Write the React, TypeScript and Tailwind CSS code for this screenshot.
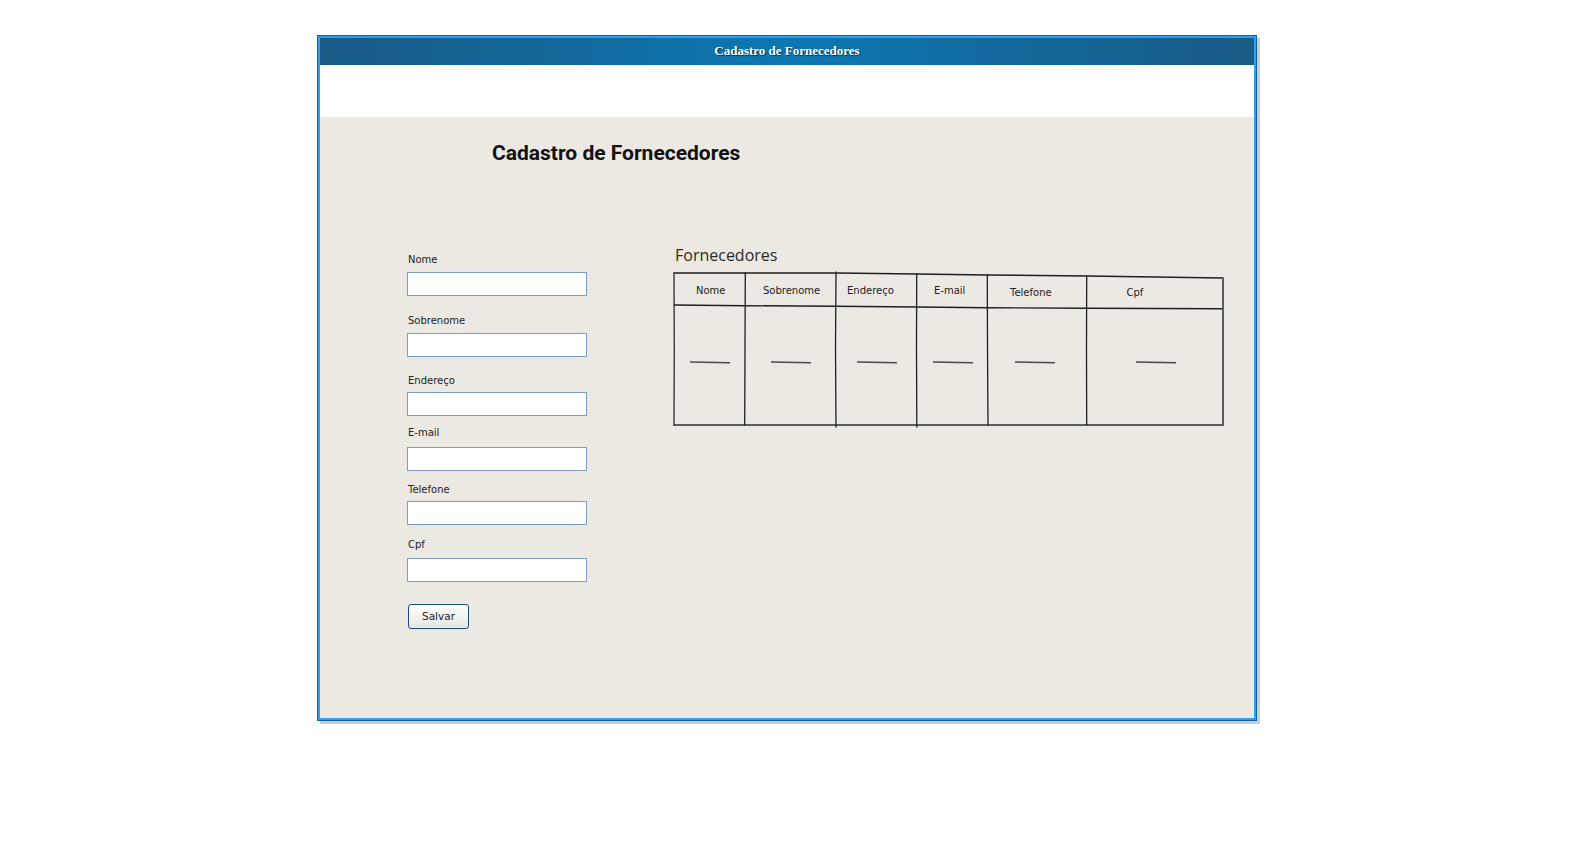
import React from 'react'

const fields = [
  { label: 'Nome', labelGap: 'mt-0', inputGap: 'mt-[6px]' },
  { label: 'Sobrenome', labelGap: 'mt-[18px]', inputGap: 'mt-[6px]' },
  { label: 'Endereço', labelGap: 'mt-[17px]', inputGap: 'mt-[5px]' },
  { label: 'E-mail', labelGap: 'mt-[10px]', inputGap: 'mt-[8px]' },
  { label: 'Telefone', labelGap: 'mt-[12px]', inputGap: 'mt-[5px]' },
  { label: 'Cpf', labelGap: 'mt-[13px]', inputGap: 'mt-[7px]' },
]

// column headers of the sketch, x/y in svg coords (svg sits at 670,268 on the page)
const headers = [
  { text: 'Nome', x: 26, y: 26 },
  { text: 'Sobrenome', x: 93, y: 26 },
  { text: 'Endereço', x: 177, y: 26 },
  { text: 'E-mail', x: 264, y: 26 },
  { text: 'Telefone', x: 340, y: 27.5 },
  { text: 'Cpf', x: 456.5, y: 28 },
]

const dashes = [
  [20, 60],
  [101, 141],
  [187, 227],
  [263, 303],
  [345, 385],
  [466, 506],
]

const SketchTable = () => (
  <svg width="562" height="164" viewBox="0 0 562 164" className="block">
    <g fill="none" strokeLinecap="round" strokeLinejoin="round">
      {/* outer frame */}
      <polyline points="4,5 166,5 247,6 317,7 417,8 553,10" stroke="#1f1f1f" strokeWidth="1.4" />
      <polyline points="4,37 75,37.7 166,38.3 247,39 317,39.7 417,40.3 553,40.8" stroke="#1f1f1f" strokeWidth="1.4" />
      <polyline points="4,157 553,157" stroke="#5d5d5a" strokeWidth="2" />
      <polyline points="4,5 4.3,80 4,157" stroke="#3a3a38" strokeWidth="1.4" />
      <polyline points="553,10 553,157" stroke="#5d5d5a" strokeWidth="2" />
      {/* dividers */}
      <polyline points="75.3,5 75,80 74.7,157" stroke="#1f1f1f" strokeWidth="1.3" />
      <polyline points="166,4 165.5,80 166,159" stroke="#1f1f1f" strokeWidth="1.3" />
      <polyline points="246.7,6 246.5,80 246.8,159" stroke="#1f1f1f" strokeWidth="1.3" />
      <polyline points="317.3,7 317.5,80 318,157" stroke="#1f1f1f" strokeWidth="1.3" />
      <polyline points="416.7,8 416.5,80 416.7,157" stroke="#1f1f1f" strokeWidth="1.3" />
    </g>
    {dashes.map(([a, b]) => (
      <line key={a} x1={a} y1={94} x2={b} y2={94.8} stroke="#4a4a48" strokeWidth="1.5" />
    ))}
    {headers.map((h) => (
      <text key={h.text} x={h.x} y={h.y} fontFamily="'DejaVu Sans', sans-serif" fontSize="10" fill="#222">
        {h.text}
      </text>
    ))}
  </svg>
)

export default function App() {
  return (
    <div className="min-h-screen bg-white pt-[35px] pl-[317px]">
      <div className="w-[940px] h-[686px] border border-[#0f62a3] shadow-[3px_3px_0_#cbcbcb] flex flex-col">
        <div className="flex-1 flex flex-col border-2 border-[#2b9ff0]">
          <div className="h-[27px] pb-[3px] flex items-center justify-center bg-[linear-gradient(90deg,#1a5b84_0%,#0c77b3_50%,#1a5b84_100%)]">
            <span className="font-['Liberation_Serif',serif] font-bold text-[13px] leading-none text-white [text-shadow:1px_1px_1px_rgba(0,0,0,0.55)]">
              Cadastro de Fornecedores
            </span>
          </div>
          <div className="h-[52px] bg-white" />
          <div className="flex-1 bg-[#ece9e2] flex flex-col">
            <h1 className="pt-[24px] pl-[172px] font-['Roboto',sans-serif] font-bold text-[21px] leading-[24px] text-[#111]">
              Cadastro de Fornecedores
            </h1>

            <div className="mt-[79px] flex">
              <div className="ml-[87px] w-[180px] pt-[9px] flex flex-col font-['DejaVu_Sans',sans-serif] text-[10px] leading-[13px] text-[#222]">
                {fields.map((f) => (
                  <React.Fragment key={f.label}>
                    <label className={`${f.labelGap} pl-[1px]`}>{f.label}</label>
                    <input type="text" className={`${f.inputGap} h-[24px] w-[180px] border border-[#7b9cc4] bg-white outline-none`} />
                  </React.Fragment>
                ))}
                <button className="mt-[22px] ml-[1px] w-[61px] h-[25px] rounded-[3px] border border-[#1d4a80] bg-gradient-to-b from-white to-[#e6e6e3] text-[10.5px] text-[#222]">
                  Salvar
                </button>
              </div>

              <div className="ml-[83px] flex flex-col">
                <h2 className="pl-[5px] font-['Open_Sans',sans-serif] text-[16px] leading-[22px] text-[#2b2b2b]">
                  Fornecedores
                </h2>
                <div className="mt-[2px]">
                  <SketchTable />
                </div>
              </div>
            </div>
          </div>
        </div>
      </div>
    </div>
  )
}
